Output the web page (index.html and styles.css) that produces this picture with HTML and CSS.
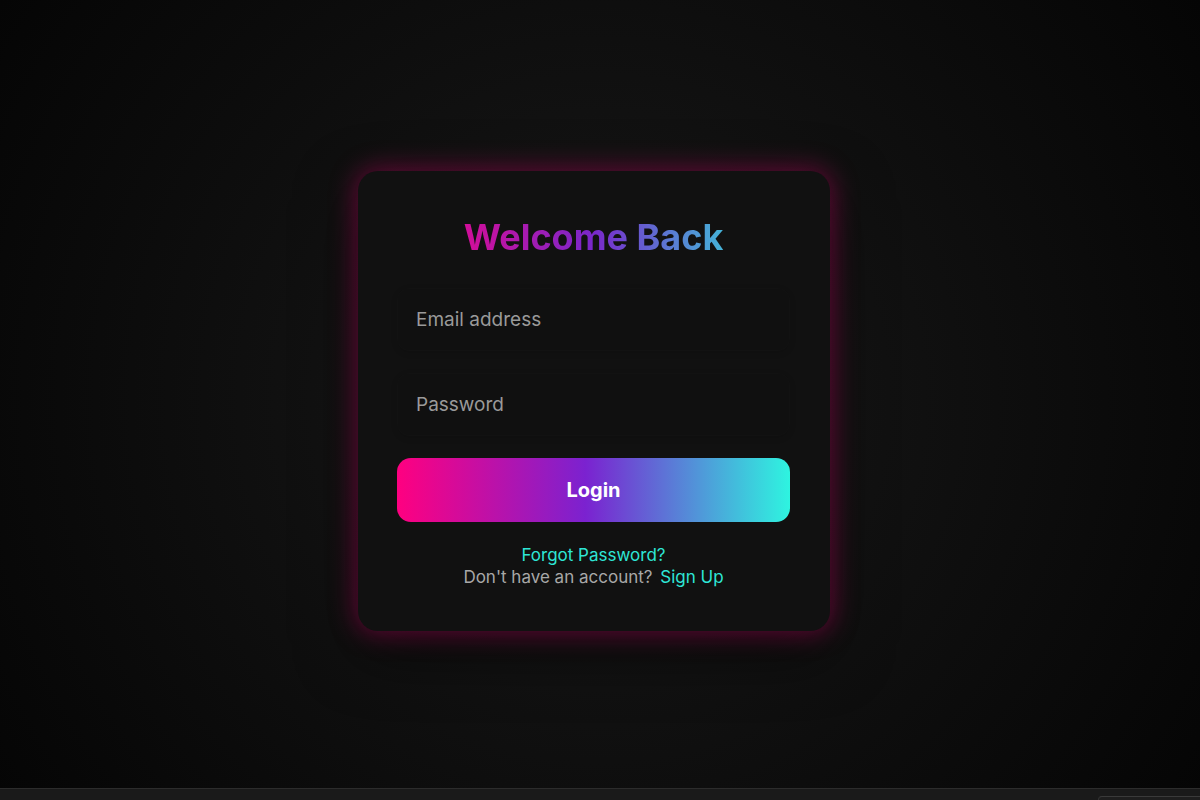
FILE: index.html
```html
<!DOCTYPE html>
<html lang="en">
<head>
<meta charset="utf-8">
<title>Login</title>
<link rel="stylesheet" href="styles.css">
</head>
<body>
<main class="page">
  <form class="card">
    <h1 class="title">Welcome Back</h1>
    <input class="field" type="email" placeholder="Email address">
    <input class="field" type="password" placeholder="Password">
    <button class="login" type="button">Login</button>
    <div class="links">
      <a class="link" href="#">Forgot Password?</a>
      <p class="signup">Don't have an account? <a class="link" href="#">Sign Up</a></p>
    </div>
  </form>
</main>
<div class="strip"><span class="strip-tab"></span></div>
</body>
</html>
```
FILE: styles.css
```css
* { box-sizing: border-box; }
html, body { margin: 0; height: 100%; }
body {
  font-family: Inter, "Noto Sans", sans-serif;
  background: radial-gradient(circle at 50% 50%, #161616 0%, #121212 35%, #0a0a0a 75%, #050505 100%);
  overflow: hidden;
}
.page {
  height: 800px;
  display: flex;
  align-items: center;
  justify-content: center;
  padding-right: 12px;
  padding-top: 2px;
}
.card {
  width: 472px;
  height: 460px;
  background: #111111;
  border-radius: 20px;
  padding: 42px 40px 40px 39px;
  display: flex;
  flex-direction: column;
  box-shadow: 0 0 26px 3px rgba(255, 0, 128, 0.34), 0 20px 60px rgba(0, 0, 0, 0.55);
}
.title {
  margin: 0 0 27px;
  text-align: center;
  font-size: 36px;
  font-weight: 700;
  line-height: 48px;
  background: linear-gradient(90deg, #ff0080 0%, #7928ca 50%, #2afadf 100%);
  -webkit-background-clip: text;
  background-clip: text;
  color: transparent;
}
.field {
  display: block;
  width: 100%;
  height: 63px;
  margin: 0 0 22px;
  padding: 0 18px;
  font-family: inherit;
  font-size: 19px;
  color: #ddd;
  background: #101010;
  border: 1px solid #121212;
  border-radius: 12px;
  outline: none;
  box-shadow: 0 2px 6px rgba(0,0,0,0.12);
}
.field::placeholder { color: #9a9a9a; }
.login {
  margin-top: 0;
  height: 64px;
  width: 100%;
  border: none;
  border-radius: 14px;
  background: linear-gradient(90deg, #ff0080 0%, #7b22d0 48%, #2ef4e0 100%);
  color: #fff;
  font-family: inherit;
  font-size: 20px;
  font-weight: 700;
  cursor: pointer;
}
.links {
  margin-top: 22px;
  display: flex;
  flex-direction: column;
  align-items: center;
  font-size: 17px;
  line-height: 22px;
}
.link { color: #2ee6d6; text-decoration: none; }
.signup { margin: 0; color: #a8a8a8; }
.signup .link { margin-left: 3px; }
.strip {
  position: fixed;
  left: 0; right: 0; bottom: 0;
  height: 12px;
  background: #1a1a1a;
  border-top: 1px solid #2c2c2c;
}
.strip-tab {
  position: absolute;
  left: 1098px; right: 0; top: 7px; bottom: 0;
  border-top: 1px solid #3a3a3a;
  border-left: 1px solid #333;
  border-top-left-radius: 6px;
  background: #1e1e1e;
}
```
